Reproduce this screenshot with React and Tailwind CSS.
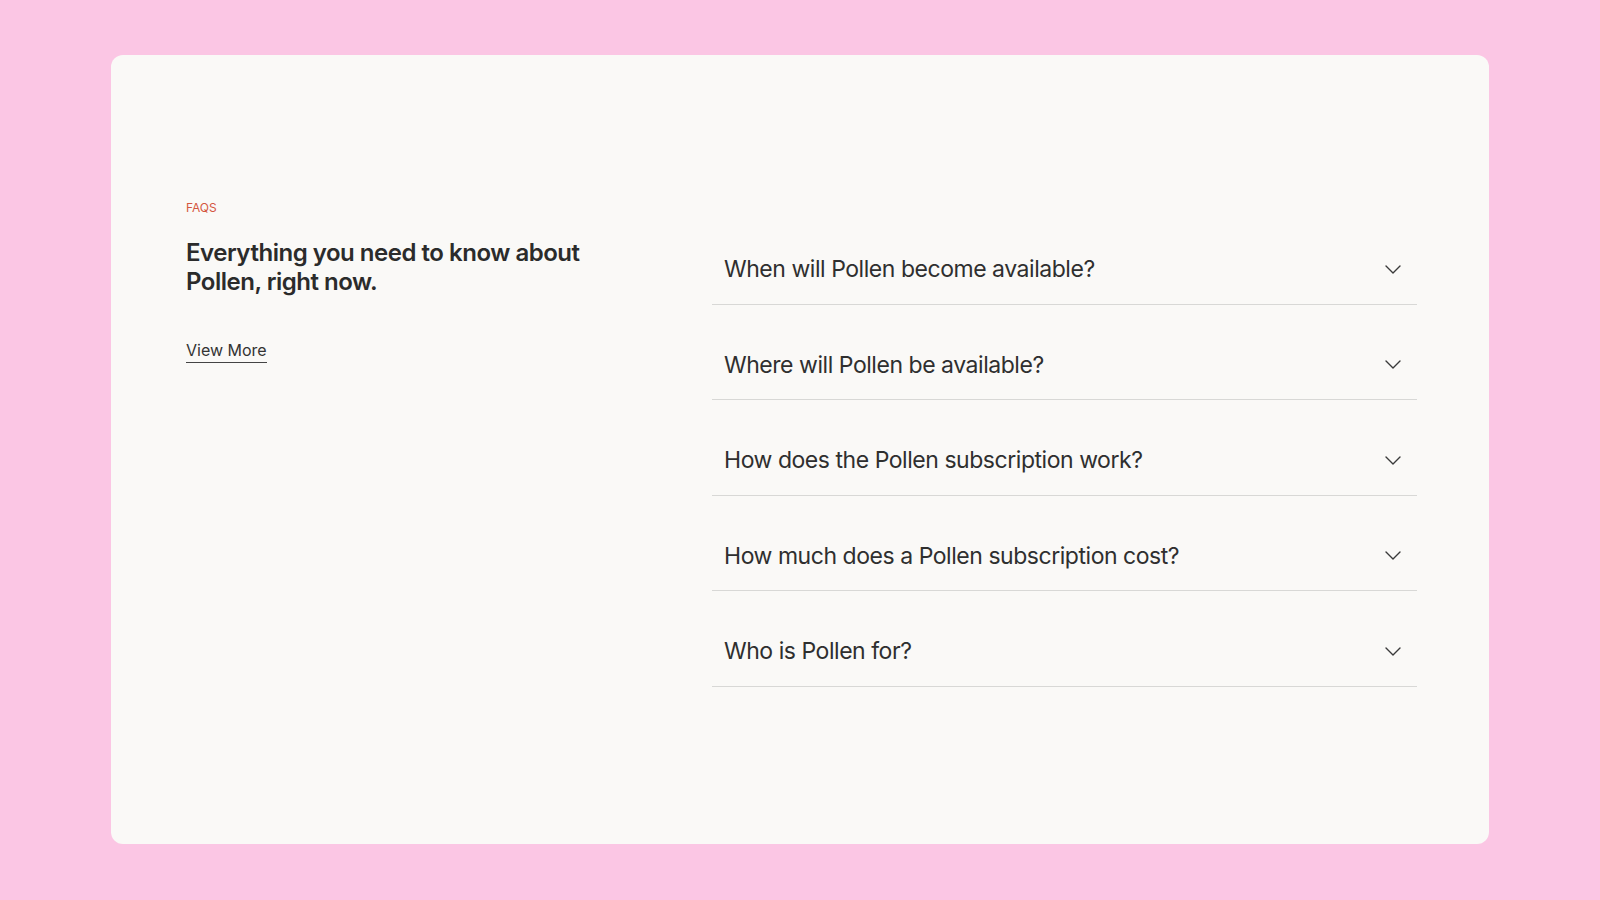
import React from 'react';

const QUESTIONS = [
  'When will Pollen become available?',
  'Where will Pollen be available?',
  'How does the Pollen subscription work?',
  'How much does a Pollen subscription cost?',
  'Who is Pollen for?',
];

const Chevron = () => (
  <svg width="16" height="9" viewBox="0 0 16 9" fill="none" className="shrink-0">
    <path d="M1 1l7 7 7-7" stroke="#3a3a3a" strokeWidth="1.4" strokeLinecap="round" strokeLinejoin="round" />
  </svg>
);

const App = () => {
  return (
    <div
      className="min-h-screen bg-[#fbc6e4] px-[111px] pt-[55px] pb-[56px]"
      style={{ fontFamily: 'Inter, "Noto Sans", sans-serif' }}
    >
      <div className="h-[789px] bg-[#faf9f7] rounded-[12px] flex pl-[75px] pr-[72px] pt-[145px]">
        <div className="w-[526px] shrink-0">
          <p className="text-[12px] leading-[16px] text-[#d4573f]">FAQS</p>
          <h2 className="mt-[22px] text-[24px] leading-[29px] font-semibold text-[#2b2b2b] tracking-[-0.02em]">
            Everything you need to know about
            <br />
            Pollen, right now.
          </h2>
          <a href="#" className="inline-block mt-[44px] text-[16px] leading-[20px] text-[#333] pb-[2px] border-b border-[#444]">
            View More
          </a>
        </div>
        <div className="flex-1 pt-[9px]">
          {QUESTIONS.map((q) => (
            <button
              key={q}
              className="w-full flex items-center justify-between pl-[12px] pr-[16px] pt-[45px] pb-[19.5px] border-b border-[#d8d8d6] text-left cursor-pointer"
            >
              <span className="text-[23px] leading-[30px] text-[#2f2f2f] tracking-[-0.02em]">{q}</span>
              <Chevron />
            </button>
          ))}
        </div>
      </div>
    </div>
  );
};

export default App;
